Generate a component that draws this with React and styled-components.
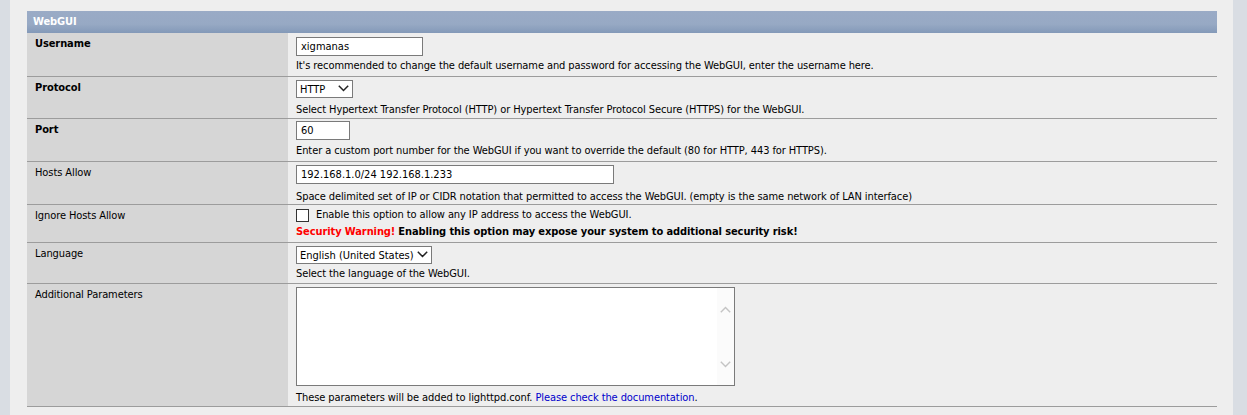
import React from "react";
import styled, { createGlobalStyle } from "styled-components";

const Global = createGlobalStyle`
  html, body { margin: 0; padding: 0; }
  body {
    background: #d9dde3;
    font-family: "DejaVu Sans Condensed", "DejaVu Sans", sans-serif;
    font-size: 11px;
    letter-spacing: -0.09px;
    color: #000;
  }
`;

const Page = styled.div`
  margin: 0 14px 0 10px;
  background: #eeeeee;
  padding: 11px 16px 9px 17px;
  height: 415px;
  box-sizing: border-box;
`;

const Table = styled.div`
  display: flex;
  flex-direction: column;
`;

const Header = styled.div`
  height: 22px;
  line-height: 22px;
  padding: 0 6px;
  color: #fff;
  font-weight: bold;
  background: linear-gradient(#9aabc6, #97a9c4 60%, #8399b8);
`;

const Row = styled.div`
  display: grid;
  grid-template-columns: 261px 1fr;
  border-bottom: 1px solid #9c9c9c;
  min-height: ${(p) => p.$h}px;
`;

const Label = styled.div`
  background: #d6d6d6;
  padding: 4px 8px 0 8px;
  font-weight: ${(p) => (p.$bold ? "bold" : "normal")};
  line-height: 14px;
`;

const Cell = styled.div`
  padding: ${(p) => p.$pt ?? 4}px 8px 0 8px;
  display: flex;
  flex-direction: column;
  align-items: flex-start;
`;

const Desc = styled.div`
  margin-top: ${(p) => p.$mt ?? 3}px;
  line-height: 14px;
`;

const TextInput = styled.input`
  box-sizing: border-box;
  width: ${(p) => p.$w}px;
  height: 19px;
  border: 1px solid #7a7a7a;
  background: #fff;
  padding: 0 4px;
  font: inherit;
  color: #000;
  outline: none;
  margin: 0;
`;

const SelectWrap = styled.div`
  position: relative;
  width: ${(p) => p.$w}px;
  height: 18px;
`;

const Select = styled.select`
  appearance: none;
  -webkit-appearance: none;
  box-sizing: border-box;
  width: 100%;
  height: 100%;
  border: 1px solid #7a7a7a;
  background: #fff;
  padding: 0 0 0 3px;
  font: inherit;
  color: #000;
  margin: 0;
  border-radius: 0;
  outline: none;
`;

const Chevron = styled.svg`
  position: absolute;
  right: 4px;
  top: 5px;
  pointer-events: none;
`;

const CheckLine = styled.label`
  display: flex;
  align-items: center;
  gap: 7px;
  line-height: 14px;
`;

const Box = styled.span`
  box-sizing: border-box;
  width: 13px;
  height: 13px;
  border: 1px solid #333;
  background: #fff;
  display: inline-block;
`;

const Warn = styled.span`
  color: #ff0000;
  font-weight: bold;
`;

const Bold = styled.span`
  font-weight: bold;
`;

const AreaWrap = styled.div`
  position: relative;
  width: 439px;
  height: 99px;
`;

const Area = styled.textarea`
  box-sizing: border-box;
  width: 100%;
  height: 100%;
  border: 1px solid #7a7a7a;
  background: #fff;
  resize: none;
  overflow: hidden;
  margin: 0;
  font: inherit;
  outline: none;
  display: block;
`;

const ScrollBar = styled.div`
  position: absolute;
  right: 1px;
  top: 1px;
  bottom: 1px;
  width: 17px;
  background: #fbfbfb;
  display: flex;
  flex-direction: column;
  justify-content: space-between;
  align-items: center;
  padding: 18px 0 17px;
  box-sizing: border-box;
  pointer-events: none;
`;

const Link = styled.a`
  color: #0000cc;
  text-decoration: none;
`;

function Chev() {
  return (
    <Chevron width="11" height="7" viewBox="0 0 11 7">
      <path d="M0.8 0.8 L5.5 5.5 L10.2 0.8" fill="none" stroke="#222" strokeWidth="1.5" />
    </Chevron>
  );
}

export default function App() {
  return (
    <>
      <Global />
      <Page>
        <Table>
          <Header>WebGUI</Header>
          <Row $h={43}>
            <Label $bold>Username</Label>
            <Cell>
              <TextInput $w={127} defaultValue="xigmanas" />
              <Desc>
                It's recommended to change the default username and password for accessing the WebGUI, enter the username here.
              </Desc>
            </Cell>
          </Row>
          <Row $h={41}>
            <Label $bold>Protocol</Label>
            <Cell $pt={3}>
              <SelectWrap $w={57}>
                <Select defaultValue="http">
                  <option value="http">HTTP</option>
                  <option value="https">HTTPS</option>
                </Select>
                <Chev />
              </SelectWrap>
              <Desc $mt={5}>
                Select Hypertext Transfer Protocol (HTTP) or Hypertext Transfer Protocol Secure (HTTPS) for the WebGUI.
              </Desc>
            </Cell>
          </Row>
          <Row $h={42}>
            <Label $bold>Port</Label>
            <Cell $pt={2}>
              <TextInput $w={54} defaultValue="60" />
              <Desc $mt={4}>
                Enter a custom port number for the WebGUI if you want to override the default (80 for HTTP, 443 for HTTPS).
              </Desc>
            </Cell>
          </Row>
          <Row $h={42}>
            <Label>Hosts Allow</Label>
            <Cell $pt={3}>
              <TextInput $w={318} defaultValue="192.168.1.0/24 192.168.1.233" />
              <Desc $mt={6}>
                Space delimited set of IP or CIDR notation that permitted to access the WebGUI. (empty is the same network of LAN interface)
              </Desc>
            </Cell>
          </Row>
          <Row $h={37}>
            <Label>Ignore Hosts Allow</Label>
            <Cell $pt={3}>
              <CheckLine>
                <Box />
                <span>Enable this option to allow any IP address to access the WebGUI.</span>
              </CheckLine>
              <Desc $mt={3}>
                <Warn>Security Warning!</Warn> <Bold>Enabling this option may expose your system to additional security risk!</Bold>
              </Desc>
            </Cell>
          </Row>
          <Row $h={40}>
            <Label>Language</Label>
            <Cell $pt={3}>
              <SelectWrap $w={136}>
                <Select defaultValue="en">
                  <option value="en">English (United States)</option>
                </Select>
                <Chev />
              </SelectWrap>
              <Desc $mt={3}>Select the language of the WebGUI.</Desc>
            </Cell>
          </Row>
          <Row $h={122}>
            <Label>Additional Parameters</Label>
            <Cell $pt={3}>
              <AreaWrap>
                <Area />
                <ScrollBar>
                  <svg width="11" height="7" viewBox="0 0 11 7">
                    <path d="M0.8 6.2 L5.5 1.5 L10.2 6.2" fill="none" stroke="#c4c4c4" strokeWidth="1.4" />
                  </svg>
                  <svg width="11" height="7" viewBox="0 0 11 7">
                    <path d="M0.8 0.8 L5.5 5.5 L10.2 0.8" fill="none" stroke="#c4c4c4" strokeWidth="1.4" />
                  </svg>
                </ScrollBar>
              </AreaWrap>
              <Desc $mt={5}>
                These parameters will be added to lighttpd.conf. <Link href="#">Please check the documentation</Link>.
              </Desc>
            </Cell>
          </Row>
        </Table>
      </Page>
    </>
  );
}
